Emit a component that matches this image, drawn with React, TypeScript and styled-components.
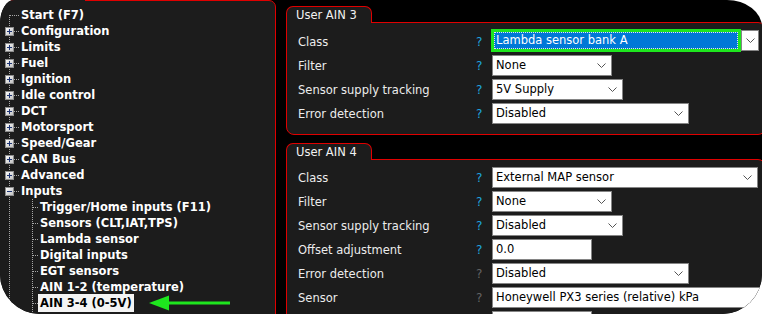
import React from 'react';
import styled, { createGlobalStyle } from 'styled-components';

const RED = '#e00000';
const PANEL = '#1c1c1c';

const GlobalStyle = createGlobalStyle`
  html, body {
    margin: 0;
    padding: 0;
    background: #ffffff;
  }
  body {
    font-family: 'DejaVu Sans', Verdana, sans-serif;
  }
`;

const Screen = styled.div`
  width: 762px;
  height: 314px;
  background: #000;
  overflow: hidden;
  display: flex;
  align-items: flex-start;
  border-radius: 14px 35px 40px 40px / 24px 27px 40px 40px;
`;

const Panel = styled.section<{ $width: number; $mt: number; $ml?: number }>`
  width: ${(p) => p.$width}px;
  flex: none;
  margin-top: ${(p) => p.$mt}px;
  margin-left: ${(p) => p.$ml || 0}px;
  display: flex;
  flex-direction: column;
`;

const Tab = styled.div<{ $width?: number }>`
  position: relative;
  z-index: 1;
  align-self: flex-start;
  box-sizing: border-box;
  height: 17px;
  ${(p) => (p.$width ? `width: ${p.$width}px;` : '')}
  margin-bottom: -1px;
  padding: 0 14px 0 9px;
  background: ${PANEL};
  border: 1px solid ${RED};
  border-bottom: none;
  border-radius: 7px 7px 0 0;
  color: #f2f2f2;
  font-size: 11.5px;
  line-height: 16px;
  white-space: nowrap;
`;

const PanelBody = styled.div<{ $pt: number; $minH?: number }>`
  background: ${PANEL};
  border: 1px solid ${RED};
  border-radius: 0 8px 8px 8px;
  padding: ${(p) => p.$pt}px 0 8px 11px;
  min-height: ${(p) => p.$minH || 0}px;
`;

const TreeBody = styled(PanelBody)`
  padding: 6px 0 0 0;
  border-radius: 0 7px 0 0;
`;

const RightColumn = styled.div`
  width: 480px;
  flex: none;
  margin-left: 10px;
  padding-top: 6px;
  display: flex;
  flex-direction: column;
  gap: 8px;
`;

const FieldGrid = styled.div`
  display: grid;
  grid-template-columns: 176px 18px auto;
  grid-auto-rows: 24px;
  align-items: center;
`;

const Label = styled.div`
  color: #ececec;
  font-size: 11.5px;
  white-space: nowrap;
`;

const Help = styled.div<{ $muted?: boolean }>`
  color: ${(p) => (p.$muted ? '#646464' : '#1ea3df')};
  font-size: 12px;
  padding-left: 2px;
`;

const SelectBox = styled.div<{ $width: number }>`
  width: ${(p) => p.$width}px;
  height: 21px;
  box-sizing: border-box;
  display: flex;
  align-items: center;
  background: #fff;
  border: 1px solid #858585;
  margin-top: -2px;
  color: #000;
  font-size: 11.5px;
  white-space: nowrap;
`;

const SelectValue = styled.span`
  flex: 1;
  padding-left: 3px;
  overflow: hidden;
`;

const ChevronWrap = styled.span`
  display: flex;
  padding: 0 5px 0 4px;
`;

const FocusWrap = styled.div`
  width: 268px;
  height: 23px;
  margin-left: -1px;
  margin-top: -3px;
  display: flex;
  align-items: stretch;
`;

const FocusValue = styled.div`
  flex: 1;
  box-sizing: border-box;
  border: 3px solid #1ee61e;
  background: #0078d7;
  display: flex;
`;

const FocusInner = styled.div`
  flex: 1;
  border: 1px dotted #e8e8e8;
  color: #fff;
  font-size: 11.5px;
  line-height: 15px;
  padding-left: 1px;
  white-space: nowrap;
`;

const DropButton = styled.div`
  width: 18px;
  box-sizing: border-box;
  margin: 1px 0;
  background: #fff;
  border: 1px solid #858585;
  display: flex;
  align-items: center;
  justify-content: center;
`;

const TreeRow = styled.div`
  height: 16px;
  display: flex;
  align-items: center;
`;

const TreeLabel = styled.span<{ $selected?: boolean }>`
  font-weight: bold;
  font-size: 11.5px;
  line-height: 16px;
  padding: ${(p) => (p.$selected ? '1px 2px' : '0 2px')};
  margin: ${(p) => (p.$selected ? '-1px 0' : '0')};
  color: ${(p) => (p.$selected ? '#000' : '#fff')};
  background: ${(p) => (p.$selected ? '#f4f4f4' : 'transparent')};
  white-space: nowrap;
`;

const ArrowMark = styled.svg`
  margin-left: 15px;
  flex: none;
`;

const Chevron = () => (
  <svg width="9" height="5" viewBox="0 0 9 5">
    <path d="M0.5 0.5 L4.5 4.5 L8.5 0.5" fill="none" stroke="#555" strokeWidth="1" />
  </svg>
);

const Select = ({ width, value, arrow = true }: { width: number; value?: string; arrow?: boolean }) => (
  <SelectBox $width={width}>
    <SelectValue>{value}</SelectValue>
    {arrow && (
      <ChevronWrap>
        <Chevron />
      </ChevronWrap>
    )}
  </SelectBox>
);

const FocusedSelect = ({ value }: { value: string }) => (
  <FocusWrap>
    <FocusValue>
      <FocusInner>{value}</FocusInner>
    </FocusValue>
    <DropButton>
      <Chevron />
    </DropButton>
  </FocusWrap>
);

const DOT = '#a8a8a8';

type Kind = 'leaf' | 'plus' | 'minus' | 'child';

const Gutter = ({ kind, first }: { kind: Kind; first?: boolean }) => {
  if (kind === 'child') {
    return (
      <svg width="38" height="16" style={{ flex: 'none' }} shapeRendering="crispEdges">
        <line x1="9.5" y1="0" x2="9.5" y2="16" stroke={DOT} strokeDasharray="1 1" />
        <line x1="32.5" y1="0" x2="32.5" y2="16" stroke={DOT} strokeDasharray="1 1" />
        <line x1="33" y1="8.5" x2="38" y2="8.5" stroke={DOT} strokeDasharray="1 1" />
      </svg>
    );
  }
  const box = kind !== 'leaf';
  return (
    <svg width="19" height="16" style={{ flex: 'none' }} shapeRendering="crispEdges">
      <defs>
        <linearGradient id="bx" x1="0" y1="0" x2="1" y2="1">
          <stop offset="0" stopColor="#ffffff" />
          <stop offset="1" stopColor="#bdbdbd" />
        </linearGradient>
      </defs>
      <line x1="9.5" y1={first ? 8 : 0} x2="9.5" y2="16" stroke={DOT} strokeDasharray="1 1" />
      <line x1={box ? 14 : 10} y1="8.5" x2="19" y2="8.5" stroke={DOT} strokeDasharray="1 1" />
      {box && (
        <>
          <rect x="5.5" y="4.5" width="8" height="8" fill="url(#bx)" stroke="#8e8e8e" />
          <line x1="7" y1="8.5" x2="12" y2="8.5" stroke="#1d3474" />
          {kind === 'plus' && <line x1="9.5" y1="6" x2="9.5" y2="11" stroke="#1d3474" />}
        </>
      )}
    </svg>
  );
};

const roots: { name: string; kind: Kind }[] = [
  { name: 'Start (F7)', kind: 'leaf' },
  { name: 'Configuration', kind: 'plus' },
  { name: 'Limits', kind: 'plus' },
  { name: 'Fuel', kind: 'plus' },
  { name: 'Ignition', kind: 'plus' },
  { name: 'Idle control', kind: 'plus' },
  { name: 'DCT', kind: 'plus' },
  { name: 'Motorsport', kind: 'plus' },
  { name: 'Speed/Gear', kind: 'plus' },
  { name: 'CAN Bus', kind: 'plus' },
  { name: 'Advanced', kind: 'plus' },
  { name: 'Inputs', kind: 'minus' },
];

const inputs = [
  'Trigger/Home inputs (F11)',
  'Sensors (CLT,IAT,TPS)',
  'Lambda sensor',
  'Digital inputs',
  'EGT sensors',
  'AIN 1-2 (temperature)',
  'AIN 3-4 (0-5V)',
];

const SELECTED = 'AIN 3-4 (0-5V)';

const App: React.FC = () => {
  return (
    <>
      <GlobalStyle />
      <Screen>
        <Panel $width={277} $mt={-16} $ml={-1}>
          <Tab $width={87} />
          <TreeBody $pt={6} $minH={400}>
            {roots.map((r, i) => (
              <TreeRow key={r.name}>
                <Gutter kind={r.kind} first={i === 0} />
                <TreeLabel>{r.name}</TreeLabel>
              </TreeRow>
            ))}
            {inputs.map((name) => (
              <TreeRow key={name}>
                <Gutter kind="child" />
                <TreeLabel $selected={name === SELECTED}>{name}</TreeLabel>
                {name === SELECTED && (
                  <ArrowMark width="82" height="16" viewBox="0 0 82 16">
                    <polygon points="0,8 20,0.5 20,15.5" fill="#1ee61e" />
                    <rect x="18" y="6.5" width="63" height="3" fill="#1ee61e" />
                  </ArrowMark>
                )}
              </TreeRow>
            ))}
            <TreeRow>
              <Gutter kind="child" />
            </TreeRow>
          </TreeBody>
        </Panel>

        <RightColumn>
          <Panel $width={480} $mt={0}>
            <Tab>User AIN 3</Tab>
            <PanelBody $pt={7}>
              <FieldGrid>
                <Label>Class</Label>
                <Help>?</Help>
                <FocusedSelect value="Lambda sensor bank A" />

                <Label>Filter</Label>
                <Help>?</Help>
                <Select width={120} value="None" />

                <Label>Sensor supply tracking</Label>
                <Help>?</Help>
                <Select width={131} value="5V Supply" />

                <Label>Error detection</Label>
                <Help>?</Help>
                <Select width={197} value="Disabled" />
              </FieldGrid>
            </PanelBody>
          </Panel>

          <Panel $width={480} $mt={0}>
            <Tab>User AIN 4</Tab>
            <PanelBody $pt={6} $minH={200}>
              <FieldGrid>
                <Label>Class</Label>
                <Help>?</Help>
                <Select width={266} value="External MAP sensor" />

                <Label>Filter</Label>
                <Help>?</Help>
                <Select width={120} value="None" />

                <Label>Sensor supply tracking</Label>
                <Help>?</Help>
                <Select width={131} value="Disabled" />

                <Label>Offset adjustment</Label>
                <Help>?</Help>
                <Select width={100} value="0.0" arrow={false} />

                <Label>Error detection</Label>
                <Help $muted>?</Help>
                <Select width={197} value="Disabled" />

                <Label>Sensor</Label>
                <Help $muted>?</Help>
                <Select width={300} value="Honeywell PX3 series (relative) kPa" arrow={false} />

                <Label />
                <Help />
                <Select width={100} arrow={false} />
              </FieldGrid>
            </PanelBody>
          </Panel>
        </RightColumn>
      </Screen>
    </>
  );
};

export default App;
